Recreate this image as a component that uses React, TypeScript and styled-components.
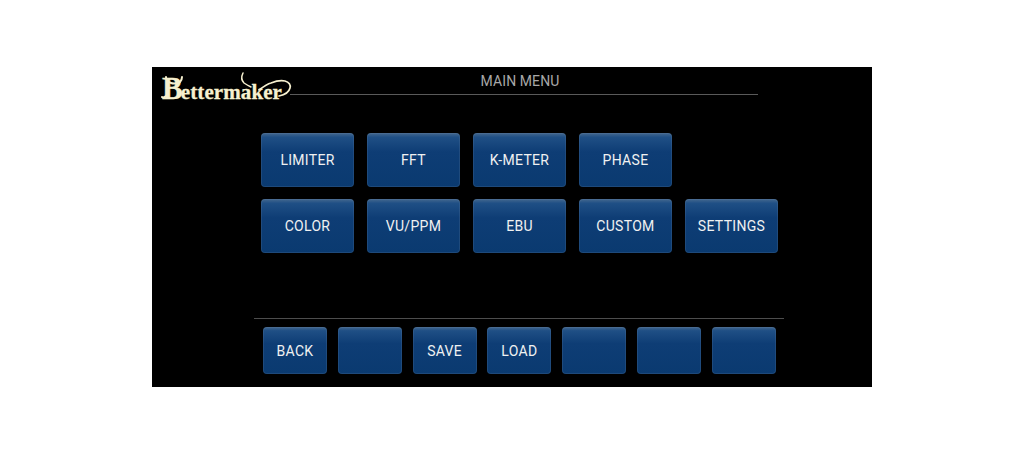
import styled, { createGlobalStyle } from 'styled-components';

const GlobalStyle = createGlobalStyle`
  html, body {
    margin: 0;
    padding: 0;
    background: #fff;
  }
`;

const topRow = ['LIMITER', 'FFT', 'K-METER', 'PHASE'];
const midRow = ['COLOR', 'VU/PPM', 'EBU', 'CUSTOM', 'SETTINGS'];
const bottomRow = ['BACK', '', 'SAVE', 'LOAD', '', '', ''];

const App = () => {
  return (
    <>
      <GlobalStyle />
      <Page>
        <Screen>
          <Header>
            <Logo>
              <LogoText>
                <BigB>B</BigB>ettermaker
              </LogoText>
              <Flourish width="138" height="36" viewBox="0 0 138 36" fill="none">
                <path d="M83 6c-2 4-2 7 1 10 3 2 5 3 7 4" stroke="#f6f0cf" strokeWidth="1.5" strokeLinecap="round" />
                <path d="M99 23c4-3 8-6 12-7 5-2 10-3 14-2 4 1 6 4 5 7-1 4-6 7-11 8" stroke="#f6f0cf" strokeWidth="1.7" strokeLinecap="round" />
                <path d="M6 10c0 3 2 5 5 6 3 1 7 0 9-1 1-1 2-3 2-5" stroke="#f6f0cf" strokeWidth="2" strokeLinecap="round" />
                <path d="M8 27c-2 3-5 4-6 3" stroke="#f6f0cf" strokeWidth="2" strokeLinecap="round" />
              </Flourish>
            </Logo>
            <TitleBar>MAIN MENU</TitleBar>
          </Header>
          <MenuGrid>
            {topRow.map(label => (
              <MenuButton key={label}>{label}</MenuButton>
            ))}
            <Spacer />
            {midRow.map(label => (
              <MenuButton key={label}>{label}</MenuButton>
            ))}
          </MenuGrid>
          <Footer>
            {bottomRow.map((label, index) => (
              <FooterButton key={index}>{label}</FooterButton>
            ))}
          </Footer>
        </Screen>
      </Page>
    </>
  );
};

const Page = styled.div`
  width: 1024px;
  height: 455px;
  padding: 67px 0 0 152px;
  box-sizing: border-box;
`;

const Screen = styled.div`
  width: 720px;
  height: 320px;
  background: #000;
  display: flex;
  flex-direction: column;
  font-family: 'Roboto', 'Liberation Sans', sans-serif;
`;

const Header = styled.header`
  display: flex;
  height: 28px;
  padding-left: 8px;
`;

const Logo = styled.div`
  position: relative;
  width: 130px;
  height: 36px;
  flex: none;
`;

const LogoText = styled.div`
  font-family: 'Liberation Serif', serif;
  font-weight: bold;
  font-size: 21px;
  line-height: 36px;
  letter-spacing: 0.1px;
  color: #f6f0cf;
  -webkit-text-stroke: 0.3px #f6f0cf;
  white-space: nowrap;
  padding: 7px 0 0 2px;
`;

const BigB = styled.span`
  font-size: 31px;
  line-height: 30px;
  margin-right: -2px;
`;

const Flourish = styled.svg`
  position: absolute;
  left: 0;
  top: 0;
`;

const TitleBar = styled.div`
  width: 468px;
  height: 28px;
  box-sizing: border-box;
  border-bottom: 1px solid #5a5a5a;
  padding-right: 8px;
  text-align: center;
  font-size: 14px;
  line-height: 28px;
  letter-spacing: 0.1px;
  color: #a8a8a8;
`;

const MenuGrid = styled.div`
  display: grid;
  grid-template-columns: repeat(5, 93px);
  grid-auto-rows: 54px;
  gap: 12px 13px;
  margin: 38px 0 0 109px;
`;

const Spacer = styled.div``;

const blueButton = `
  box-sizing: border-box;
  padding: 0;
  border: none;
  border-radius: 4px;
  background: linear-gradient(#44688f 0%, #1f4f85 8%, #0e3d75 35%, #0a3a70 100%);
  box-shadow: inset 0 0 0 1px rgba(110, 135, 165, 0.2);
  color: #f0f1f1;
  font-family: inherit;
  font-size: 14px;
  letter-spacing: 0.3px;
`;

const MenuButton = styled.button`
  ${blueButton}
  width: 93px;
  height: 54px;
`;

const Footer = styled.footer`
  display: flex;
  gap: 10.8px;
  width: 530px;
  height: 69px;
  box-sizing: border-box;
  margin: auto 0 0 102px;
  padding: 8px 0 0 9px;
  border-top: 1px solid #4d4d4d;
`;

const FooterButton = styled.button`
  ${blueButton}
  width: 64px;
  height: 47px;
`;

export default App;
